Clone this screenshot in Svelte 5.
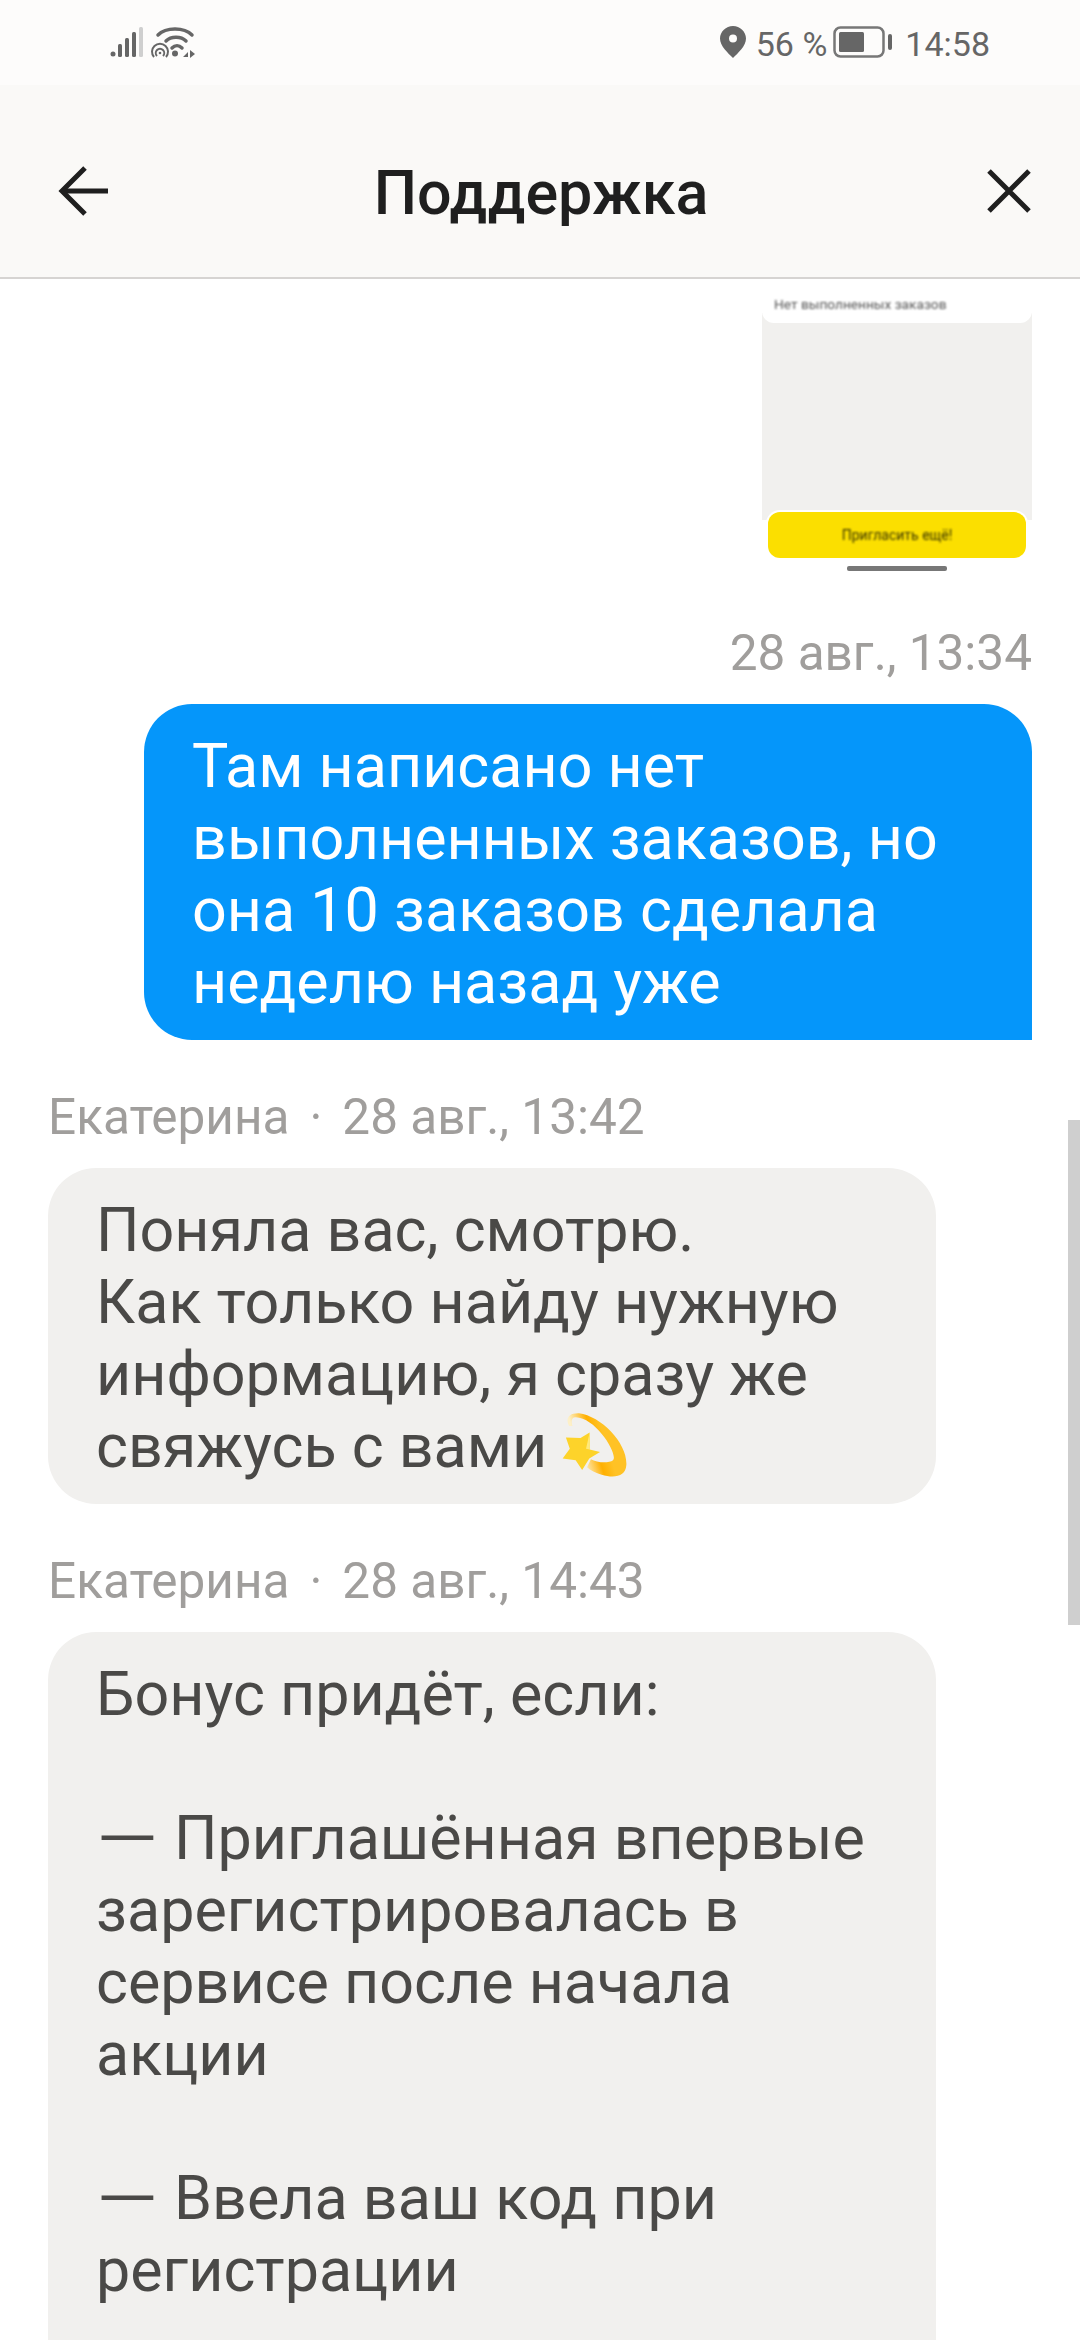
<script>
  const incoming = [
    {
      time: '28 авг., 13:42',
      lines: ['Поняла вас, смотрю.', 'Как только найду нужную', 'информацию, я сразу же'],
      last: 'свяжусь с вами',
      emoji: true,
    },
    {
      time: '28 авг., 14:43',
      lines: [
        'Бонус придёт, если:',
        '',
        '— Приглашённая впервые',
        'зарегистрировалась в',
        'сервисе после начала',
        'акции',
        '',
        '— Ввела ваш код при',
        'регистрации',
        '',
      ],
    },
  ];
</script>

<div class="screen">
  <header class="top">
    <div class="status">
      <div class="status__left">
        <svg width="34" height="32" viewBox="0 0 34 32">
          <circle cx="3" cy="28" r="2.5" fill="#666" />
          <rect x="8" y="18" width="4" height="13" rx="1.5" fill="#666" />
          <rect x="15" y="12" width="4" height="19" rx="1.5" fill="#666" />
          <rect x="22" y="6" width="4" height="25" rx="1.5" fill="#666" />
          <rect x="29" y="1" width="4" height="30" rx="1.5" fill="#cfcfcf" />
        </svg>
        <svg width="46" height="32" viewBox="0 0 46 32" fill="none" stroke="#666">
          <path d="M8 9C16 1 34 1 42 9" stroke-width="3.5" stroke-linecap="round" />
          <path d="M16 15C21 10 31 10 36 15" stroke-width="3.5" stroke-linecap="round" />
          <path d="M22 22C25 19 29 19 32 22" stroke-width="3.5" stroke-linecap="round" />
          <circle cx="25" cy="27.500" r="3" fill="#666" stroke="none" />
          <path d="M4 31a8 8 0 1 1 12 0" stroke-width="2" />
          <path d="M7 30a4.200 4.200 0 1 1 6 0" stroke-width="2" />
          <circle cx="10" cy="27" r="1.300" fill="#666" stroke="none" />
          <path d="M33 31l5-5v5zM40 24v8l5-4z" fill="#666" stroke="none" />
        </svg>
      </div>
      <div class="status__right">
        <svg width="26" height="32" viewBox="0 0 26 32">
          <path fill-rule="evenodd" fill="#666" d="M13 0C6 0 0 5.600 0 12.500C0 20 8 27 13 32C18 27 26 20 26 12.500C26 5.600 20 0 13 0ZM13 8.500a4 4 0 1 1 0 8a4 4 0 1 1 0-8Z" />
        </svg>
        <span class="pct">56 %</span>
        <svg width="60" height="32" viewBox="0 0 60 32">
          <rect x="1.500" y="1.500" width="49" height="29" rx="6" fill="none" stroke="#777" stroke-width="2.500" />
          <rect x="6" y="6" width="25" height="20" rx="1.500" fill="#666" />
          <rect x="55" y="8" width="4" height="16" rx="2" fill="#666" />
        </svg>
        <span class="clock">14:58</span>
      </div>
    </div>
    <div class="bar">
      <svg width="52" height="52" viewBox="0 0 52 52" fill="none" stroke="#1f1f1f" stroke-width="5">
        <path d="M27 3L4 26L27 49" />
        <path d="M4 26H50" />
      </svg>
      <h1>Поддержка</h1>
      <svg width="46" height="46" viewBox="0 0 46 46" fill="none" stroke="#1f1f1f" stroke-width="5">
        <path d="M3 3L43 43M43 3L3 43" />
      </svg>
    </div>
  </header>

  <main class="chat">
    <div class="shot">
      <div class="shot__title"><span>Нет выполненных заказов</span></div>
      <div class="shot__body"></div>
      <div class="shot__btn"><span>Пригласить ещё!</span></div>
      <div class="shot__home"></div>
    </div>

    <div class="stamp">28 авг., 13:34</div>
    <div class="bubble bubble--out">Там написано нет<br />выполненных заказов, но<br />она 10 заказов сделала<br />неделю назад уже</div>

    {#each incoming as msg (msg.time)}
      <div class="meta"><span>Екатерина</span><span>·</span><span>{msg.time}</span></div>
      <div class="bubble bubble--in">
        {#each msg.lines as line}
          {#if line.startsWith('— ')}
            <div class="line"><span class="dash">—</span>{line.slice(2)}</div>
          {:else}
            <div class="line">{line}</div>
          {/if}
        {/each}
        {#if msg.last}
          <div class="line">{msg.last}
            <svg class="emoji" width="65" height="67" viewBox="118 92 200 206">
              <defs>
                <linearGradient id="tail" x1="0.3" y1="0.9" x2="0.75" y2="0.75">
                  <stop offset="0" stop-color="#fdf0c8" />
                  <stop offset="0.6" stop-color="#ffb000" />
                  <stop offset="1" stop-color="#ffc225" />
                </linearGradient>
              </defs>
              <path d="M140 135C128 112 138 95 170 96C240 105 320 190 316 255C314 290 280 297 240 285C222 280 205 272 195 262L207 237C225 248 262 250 275 240C292 225 225 110 160 108C146 108 146 122 150 135Z" fill="url(#tail)" />
              <path d="M130 170L175 172L203 155L203 207L235 215L202 235L180 270L160 240L120 235L142 205Z" fill="#fdd32a" />
              <path d="M203 155L203 207L192 205Z" fill="#ffe97a" />
            </svg>
          </div>
        {/if}
      </div>
    {/each}
  </main>

  <div class="scroll"></div>
</div>

<style>
  :global(body) {
    margin: 0;
    background: #fff;
  }

  .screen {
    position: relative;
    width: 1080px;
    height: 2340px;
    overflow: hidden;
    background: #fff;
    font-family: Roboto, "Noto Sans", sans-serif;
  }

  .top {
    background: #faf9f7;
    border-bottom: 2px solid #d6d4d2;
    box-sizing: border-box;
    height: 279px;
  }

  .status {
    height: 85px;
    padding: 26px 90px 0 110px;
    box-sizing: border-box;
    display: flex;
    justify-content: space-between;
    background: #fdfcfb;
  }
  .status__left {
    display: flex;
    gap: 6px;
    align-items: flex-start;
  }
  .status__right {
    display: flex;
    align-items: flex-start;
    color: #666;
    font-size: 34px;
    line-height: 36px;
  }
  .pct {
    margin: 0 6px 0 10px;
  }
  .clock {
    margin-left: 12px;
  }

  .bar {
    height: 192px;
    padding: 20px 48px 0 58px;
    box-sizing: border-box;
    display: flex;
    justify-content: space-between;
    align-items: center;
  }
  .bar h1 {
    margin: 4px 14px 0 0;
    font-size: 61px;
    font-weight: 500;
    color: #1f1f1f;
  }

  .chat {
    padding: 6px 48px 0;
    display: flex;
    flex-direction: column;
    align-items: flex-start;
  }

  .shot {
    align-self: flex-end;
    width: 270px;
    height: 290px;
    display: flex;
    flex-direction: column;
    align-items: center;
    background: #fff;
  }
  .shot__title {
    position: relative;
    align-self: stretch;
    box-sizing: border-box;
    height: 38px;
    padding: 12px 0 0 12px;
    font-size: 13.7px;
    line-height: 14px;
    color: #555;
    background: #fff;
    border-radius: 0 0 12px 12px;
    white-space: nowrap;
  }
  .shot__body {
    align-self: stretch;
    height: 207px;
    margin-top: -10px;
    background: #f1f0ee;
  }
  .shot__btn {
    position: relative;
    width: 258px;
    height: 46px;
    margin-top: -8px;
    background: #fbdf00;
    border-radius: 12px;
    box-shadow: 0 0 0 2px #fff;
    color: #3b3600;
    font-size: 14px;
    line-height: 46px;
    text-align: center;
  }
  .shot__title span,
  .shot__btn span {
    display: inline-block;
    filter: blur(0.8px);
  }
  .shot__home {
    width: 100px;
    height: 5px;
    margin-top: 8px;
    background: #777;
    border-radius: 2px;
  }

  .stamp {
    align-self: flex-end;
    margin-top: 50px;
    font-size: 49.5px;
    line-height: 56px;
    color: #a09e9c;
  }

  .bubble {
    box-sizing: border-box;
    width: 888px;
    padding: 26px 48px 22px;
    font-size: 61px;
    line-height: 72px;
    border-radius: 48px;
  }
  .bubble--out {
    align-self: flex-end;
    margin-top: 23px;
    background: #0596fa;
    color: #fff;
    border-bottom-right-radius: 0;
  }
  .bubble--in {
    margin-top: 23px;
    background: #f1f0ee;
    color: #4a4947;
  }
  .line {
    height: 72px;
    white-space: nowrap;
  }
  .dash {
    display: inline-block;
    width: 78px;
    transform: scaleX(1.3);
    transform-origin: left;
  }
  .emoji {
    vertical-align: -12px;
  }

  .meta {
    margin-top: 49px;
    display: flex;
    gap: 20px;
    font-size: 49.5px;
    line-height: 56px;
    color: #a09e9c;
  }

  .scroll {
    position: absolute;
    right: 0;
    top: 1120px;
    width: 12px;
    height: 505px;
    background: #cfcfcf;
  }
</style>
